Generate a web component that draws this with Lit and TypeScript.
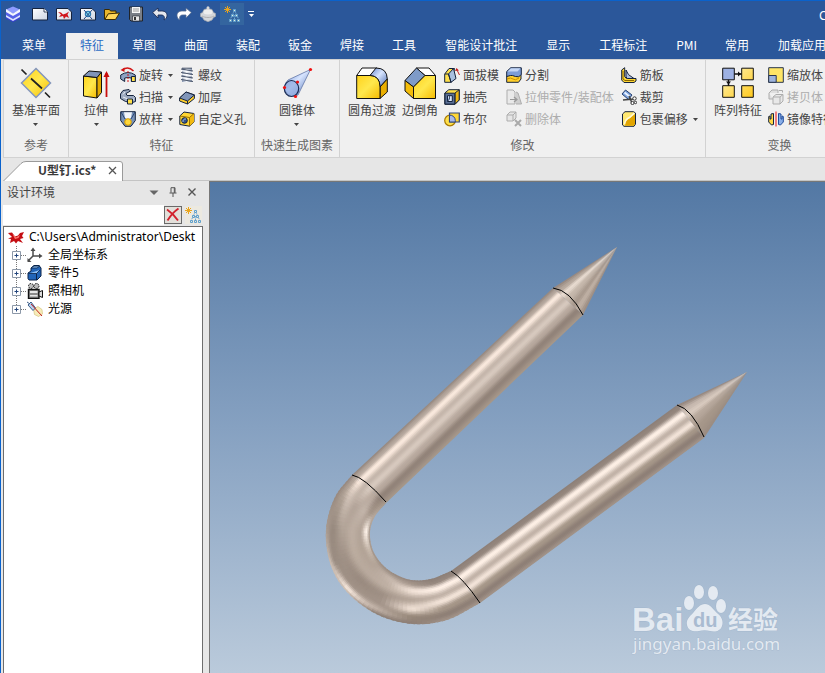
import { LitElement, html, svg, css, SVGTemplateResult } from "lit";
import { customElement, state } from "lit/decorators.js";
import { classMap } from "lit/directives/class-map.js";

/* ---------- icons, 16 unit grid ---------- */
const K = "#15233d";
const G = "#adadad";

const small: Record<string, SVGTemplateResult> = {
  logo: svg`<path d="M1 9v3.500L8 16l7-3.500V9l-7 4z" fill="#3a3fd6"/><path d="M1 5v4l7 4 7-4V5L8 9z" fill="#5560ea"/>
    <path d="M1 3.500L8 .5l7 3-7 4z" fill="#8e9bff"/><path d="M1 3l7 4.500L15 3v3l-7 4-7-4z" fill="#f4f6ff"/><path d="M1 9l7 4 7-4v2l-7 4-7-4z" fill="#dbe1ff"/>`,
  sheet: svg`<path d="M.5 2.500H12L15.500 6v8H.5z" fill="url(#paper)" stroke="${K}"/><path d="M12 2.500V6h3.500" fill="#fff" stroke="${K}" stroke-width=".8"/>`,
  sheetRed: svg`<path d="M.5 2.500H12L15.500 6v8H.5z" fill="url(#paper)" stroke="${K}"/><path d="M2 6l3 .5 2 2 3-1 3-2-1.500 3L13 12l-3-1.500L8 13l-1-3-4 1 2-2.500z" fill="#d0141b"/>`,
  sheetDraw: svg`<path d="M.5 2.500H12L15.500 6v8H.5z" fill="url(#paper)" stroke="${K}"/><circle cx="8" cy="8" r="2.800" fill="#7ed3e8" stroke="#1c6fae"/><path d="M4 4l8 9M12.500 3.500L4 13" stroke="#234a86"/>`,
  open: svg`<path d="M.5 13V3.500h5l1 1.500H12v3" fill="#e9b62b" stroke="#3b2a00"/><path d="M.8 13.500l3.500-5.700 11.200-.8-4 6.500z" fill="#ffd65a" stroke="#3b2a00"/>`,
  save: svg`<path d="M1.500 1h13v14H3l-1.500-1.500z" fill="#7a7f87" stroke="#20242b"/><path d="M4 1h8v6H4z" fill="#f7f7f7"/><path d="M5 3h6M5 5h6" stroke="#9a9a9a"/><path d="M4.500 10h7v5h-7z" fill="#e8e8e8" stroke="#20242b" stroke-width=".6"/><path d="M6 11h2v3H6z" fill="#333"/>`,
  undo: svg`<path d="M.7 6.500L6 2v3h3.500c4 0 5.500 2 5.500 4.500 0 2-1 3.500-3 4.500 1-3 0-5-3-5H6v3z" fill="#e6e8ee" stroke="#1b2d55" stroke-width=".9"/>`,
  redo: svg`<path d="M15.300 6.500L10 2v3H6.500C2.500 5 1 7 1 9.500c0 2 1 3.500 3 4.500-1-3 0-5 3-5h3v3z" fill="#fff" stroke="#53698f" stroke-width=".8"/>`,
  ball: svg`<path d="M8 2.500l4 1 1.500 3 2 1v3l-2 1L12 14l-4 1.700L4 14l-1.500-2.500-2-1v-3l2-1L4 3.500z" fill="#d4d6da" stroke="#a4a7ad" stroke-width=".7"/><ellipse cx="8" cy="6" rx="4.500" ry="2.500" fill="#ededed"/><path d="M2 10c3 2 9 2 12 0" stroke="#b0b0b0" fill="none"/><circle cx="8" cy="1.800" r="1.500" fill="#d8d8d8"/>`,
  spark: svg`<path d="M3.500 0v7M0 3.500h7M1 1l5 5M6 1L1 6" stroke="#eaa51c"/><path d="M10.500 4L6 14M10.500 4L15 14M8.500 9h4M10.500 9v5" stroke="#6fa6d2" stroke-dasharray="1.500 1"/><g fill="#e9efd9" stroke="#5f9fce"><path d="M9.500 3.500h2v2h-2zM7.500 8.500h2v2h-2zM11.500 8.500h2v2h-2zM5.500 13.500h2v2h-2zM9.500 13.500h2v2h-2zM13.500 13.500h2v2h-2z"/></g>`,
  revolve: svg`<path d="M.7 8q7.300-5 14.600 0v6.500h-4V11q-3.300-1-6.600 0v3.500L.7 12z" fill="#8da3c4" stroke="${K}"/><path d="M11.500 9.500h3.800v5h-3.800z" fill="#ffe04a" stroke="${K}"/><path d="M13.500 4Q8-1.500 2.500 3" fill="none" stroke="#d11515" stroke-width="1.500"/><path d="M.5 3L4.500.5v4.500z" fill="#d11515"/><path d="M8 4v12" stroke="#d11515" stroke-dasharray="2 1"/>`,
  sweep: svg`<path d="M3 1.500l6-1 1.500 1.500L6 4.500l1 2h6.500l2 2v4l-3 1-7-1-5-3V5z" fill="#9daac0" stroke="${K}"/><path d="M3 5.500L5 3M3 8l5 2h6" stroke="#e8edf5" fill="none"/><path d="M7.500 10h5v5h-5z" fill="#ffe04a" stroke="${K}"/>`,
  loft: svg`<path d="M.7.7h14.600v8.800L11 15.300H5L.7 9.500z" fill="#7892b8" stroke="${K}"/><path d="M4 1.200h8L11 7l-3 1.500L5 7z" fill="#f2f5fa"/><path d="M1 1l4 7M15 1l-4 7" stroke="#2b4574"/><circle cx="8" cy="11" r="3.300" fill="#ffd83b" stroke="#d49b00"/>`,
  thread: svg`<path d="M3 1h10v14H3z" fill="url(#steel)"/><path d="M2 2l12 2M2 5.500l12 2M2 9l12 2M2 12.500l12 2" stroke="#4b566a"/><path d="M2 3.500l12 2M2 7l12 2M2 10.500l12 2" stroke="#fff"/><path d="M3 1.200h10" stroke="#4b566a"/>`,
  thicken: svg`<path d="M.6 9L7 3l8.400 3v3.500L8.500 15 .6 12z" fill="#ffcf2b" stroke="${K}"/><path d="M.6 9L7 3l8.400 3-6.900 6z" fill="#8095b8" stroke="${K}"/><path d="M8.500 12v3" stroke="${K}"/>`,
  hole: svg`<path d="M.8 5L5 1l10 1.500V11l-4.500 4.200L.8 13.500z" fill="#ffd633" stroke="${K}"/><path d="M10.500 6.500L15 2.500V11l-4.500 4.200z" fill="#f2b90f"/><path d="M.8 5l9.700 1.500L15 2.500M10.500 6.500V15" fill="none" stroke="#9b7100"/><circle cx="5.500" cy="9.500" r="2.800" fill="#34568e" stroke="${K}"/><path d="M4 11a2.500 2.500 0 013-3" stroke="#a8bfe2" fill="none"/>`,
  draft: svg`<path d="M.7 7l4.300-5.500h5.500L7 15.300H.7z" fill="#ffe04a" stroke="${K}"/><path d="M4.500 7L9.500 1.500l2.500 10-5 3.800z" fill="#a9bfe0" stroke="${K}"/><path d="M1 7h3.500L7 15.300" stroke="${K}" fill="none"/><path d="M15.500 8l-2.500-5" stroke="#c42020"/><path d="M11 4L12.500 1 15 3.500z" fill="#c42020"/>`,
  shell: svg`<path d="M.8 4l4-3.300h10.400V11L11 15.300H.8z" fill="#ffe04a" stroke="${K}"/><path d="M11 4l4.200-3.300V11L11 15.200z" fill="#edb511" stroke="${K}"/><path d="M1 4.200h9.800v10.900H1z" fill="#5b7096" stroke="${K}"/><path d="M3.500 6.700h4.800v5.800H3.500z" fill="#dce7f8" stroke="${K}"/><path d="M3.500 12.500l2-2.500V6.700" fill="#6c96cf" stroke="${K}" stroke-width=".7"/>`,
  boolean: svg`<circle cx="6" cy="9.500" r="5.300" fill="#ffe04a" stroke="#a97a00" stroke-width="1.200"/><path d="M5.500 2h9.800v9H5.500z" fill="#ffd633" stroke="#31477c" stroke-width="1.200"/><path d="M5.500 4.200a5.300 5.300 0 015.800 5.300V11H5.500z" fill="#a9b9e8" stroke="#31477c"/>`,
  split: svg`<path d="M.7 9l2.500-2H15v5l-2.500 3.300H.7z" fill="#ffcf2b" stroke="${K}"/><path d="M.7 4.500l4-3.700H15.300V7.500Q13 11 9.500 9.500T4.500 8.500L.7 9.500z" fill="#7c9cd6" stroke="${K}"/><path d="M1.500 4.500L5 1.300h9.500l-3 3.200z" fill="#c4d6f5"/><path d="M1 12q4-2 6 0t6-1" stroke="#c98f00" fill="none"/>`,
  stretchPart: svg`<path d="M1 1h6l2 2v12H1z" fill="#e9e9e9" stroke="${G}"/><path d="M10 3l2 1 3.500 11H10" fill="#cfcfcf" stroke="${G}"/><path d="M4 10.500h6M8 8l3 2.500L8 13" stroke="#999" fill="none" stroke-width="1.200"/>`,
  deleteBody: svg`<path d="M1 4l3-3h6v6l-3 3H1z" fill="#e6e6e6" stroke="${G}"/><path d="M1 4h6v6M7 4l3-3" fill="none" stroke="${G}"/><path d="M9 9l6 6M15 9l-6 6" stroke="#aaa" stroke-width="2"/>`,
  rib: svg`<path d="M.7 3l3-2.300v9L5.500 11.500H15v2.500L13 15.500H3L.7 13z" fill="#ffd633" stroke="${K}"/><path d="M5 3q1 5 8 8.500H6.500L5 10z" fill="#aebddd" stroke="${K}"/><path d="M2 4v8l2 1.500h9" fill="none" stroke="#8a6800"/>`,
  trim: svg`<path d="M1 5l3.500-4L11 6l-3.500 4.500z" fill="#7da4df" stroke="#29416f"/><path d="M3.500 3.500l5 4" stroke="#eaf2ff" stroke-width="1.800"/><path d="M2 11l11-1M8 7l3 7" stroke="#444" stroke-width="1.500"/><circle cx="13.500" cy="9.500" r="1.700" fill="#fff" stroke="#333"/><circle cx="11.500" cy="14" r="1.600" fill="#fff" stroke="#333"/><circle cx="14.500" cy="13.500" r="1.200" fill="#fff" stroke="#333"/>`,
  wrap: svg`<path d="M4 .7h8.500L14.500 2v11L13 15.300H3L1.500 14V3z" fill="#ffe873" stroke="${K}"/><path d="M4 14.800q0-6 5-7.800l5-4v10l-1.300 1.800z" fill="#e2a500"/><path d="M3.500 13q1-5 5-6.500L13.500 2" fill="none" stroke="#fff9d8" stroke-width="1.500"/>`,
  scale: svg`<path d="M.7.700h14.600v14.600H.7z" fill="#ffe566" stroke="#29354d"/><path d="M.7 8.500h7.500v6.800H.7z" fill="#9eb4dd" stroke="#29354d"/>`,
  copyBody: svg`<path d="M1 4l3-3h6v3M1 4v6h4" fill="#dfdfdf" stroke="${G}"/><path d="M5 8l3-2.500h7V12l-3 3H5z" fill="#e8e8e8" stroke="${G}"/><path d="M5 8h7v7M12 8l3-2.500" fill="none" stroke="${G}"/><path d="M11 1.500h3.500v2" fill="none" stroke="#aaa"/>`,
  mirror: svg`<path d="M5.500 2.500v11L3.500 14 .7 11V5.500L2 5v3h1V3z" fill="#ffd845" stroke="${K}"/><path d="M10.500 2.500v11l2 .5 2.800-3V5.500L14 5v3h-1V3z" fill="#88aee8" stroke="#1f4b9c"/><path d="M8 .5v15" stroke="#e11"/>`,
  model: svg`<path d="M0 4l4-.5 3 4 3-1 2-2.500 4-1-2 4 1.500 2L12 10l3 4-5-2-2 2.500L6 12l-4 2 1-4-3-.5L4 8z" fill="#c40d12"/><path d="M4.500 5L8 8.500l4-2.500-1.500 3L7 10z" fill="#ff7b70"/>`,
  axes: svg`<path d="M6 9V2M6 9h8M6 9l-5 5" stroke="#4c4c4c" stroke-width="1.500"/><path d="M3.500 4L6 .5 8.500 4zM12 6.500L15.500 9 12 11.500zM.5 11v4h4z" fill="#4c4c4c"/>`,
  part: svg`<path d="M1 8l3-2V3l3-2.500h5L14 3v8l-4 4H2l-1-1.500z" fill="#2265b8" stroke="#0b2348"/><path d="M4 3h6l3-2H7zM1.500 8.500h8L13 5" fill="#8fc0f2" stroke="#0b2348" stroke-width=".8"/><path d="M9.500 8.500V15" stroke="#0b2348"/>`,
  camera: svg`<circle cx="4" cy="3" r="2.500" fill="#bbb" stroke="#111" stroke-dasharray="1.500 1"/><circle cx="9.500" cy="3" r="2.500" fill="#bbb" stroke="#111" stroke-dasharray="1.500 1"/><path d="M1.500 6.500H12v9H1.500z" fill="#8b8b8b" stroke="#111" stroke-width="1.400"/><path d="M3 8h7.500v2H3zM3 12h7.500v1.500H3z" fill="#e6e6e6"/><path d="M12 9l3.500-1.500v7L12 13z" fill="#ddd" stroke="#111"/>`,
  light: svg`<path d="M6.500 8l4.500-2.500 4 3 .5 4.500-4 2.500-4-2z" fill="#f6ecba" stroke="#d0be70" stroke-width=".6"/><path d="M1 4l3-3 4.500 6-2.500 2.500z" fill="#b8d2f0" stroke="#3c5d87"/><path d="M4 3l11 12" stroke="#c51d1d"/><path d="M0 1l3 2" stroke="#3c5d87"/>`,
};

/* ---------- icons, 32 unit grid ---------- */
const large: Record<string, SVGTemplateResult> = {
  plane: svg`<path d="M16 1.500L30.500 16 16 30.500 1.500 16z" fill="url(#gold)" stroke="#8496bd" stroke-width="1.500"/><path d="M1.500 2.500l5 5M11 11.500L22 21.500M25 25.500l5 5" stroke="#222" stroke-width="1.700"/>`,
  extrude: svg`<path d="M3.500 9L17 10.500V31L3.500 29z" fill="url(#gold)" stroke="#111"/><path d="M17 10.500L21.500 5v20.500L17 31z" fill="#e5ab00" stroke="#111"/><path d="M3.500 9L9 4l12.500 1L17 10.500z" fill="#8094b8" stroke="#111"/><path d="M26.500 30V6" stroke="#c90d0d" stroke-width="1.800"/><path d="M23.500 10l3-6 3 6z" fill="#c90d0d"/>`,
  cone: svg`<path d="M29.500 2.500L7 13Q1.500 19 5 25q5 6 12 3z" fill="url(#blue)" stroke="#6478a8" stroke-width=".8"/><ellipse cx="10.500" cy="21.500" rx="7.200" ry="8" fill="#8fa9e0" fill-opacity=".7" stroke="#1a2c55" stroke-width="1.200"/><g fill="#f01010"><circle cx="29.500" cy="2.500" r="1.600"/><circle cx="3.500" cy="20.500" r="1.600"/><circle cx="16.500" cy="15" r="1.600"/><circle cx="14.500" cy="29.500" r="1.600"/></g>`,
  fillet: svg`<path d="M.7 8.500L6 1h15l-7 7.500z" fill="#fff" stroke="#111"/><path d="M14 8.500L20 1q11 0 11.300 11L24 20q0-11-10-11.500z" fill="url(#blue)" stroke="#111"/><path d="M24 20l7.300-8v13L24 31.500z" fill="#e9ae00" stroke="#111"/><path d="M.7 8.500H14Q24 9 24 20v11.500H.7z" fill="url(#gold)" stroke="#111"/>`,
  chamfer: svg`<path d="M12.500 1H25l6.500 7.500H21z" fill="#fff" stroke="#111"/><path d="M1 13.500L12.500 1 21 8.500 9.500 20z" fill="#7e9bc8" stroke="#111"/><path d="M1 13.500L9.500 20v11.500L1 24z" fill="#f4bd0a" stroke="#111"/><path d="M9.500 20L21 8.500h10.500v23h-22z" fill="url(#gold)" stroke="#111"/>`,
  pattern: svg`<path d="M12 7h8M6.500 12v7" stroke="#111" stroke-width="1.500"/><path d="M16 4.500v5l3-2.500zM4 14.500h5l-2.500 3z" fill="#111"/><path d="M.7 1.200h11.600v11.600H.7z" fill="#9db1e3" stroke="#111"/><path d="M19.700 1.200h11.600v11.600H19.700zM.7 18.700h11.600v11.600H.7zM19.700 18.700h11.600v11.600H19.700z" fill="url(#cell)" stroke="#111"/>`,
};

const icon = (name: string) => html`<svg class="ico" viewBox="0 0 16 16" fill="none" aria-hidden="true">${small[name]}</svg>`;
const bigIcon = (name: string) => html`<svg class="big-ico" viewBox="0 0 32 32" fill="none" aria-hidden="true">${large[name]}</svg>`;
const caret = html`<svg class="caret" viewBox="0 0 5 3" aria-hidden="true"><path d="M0 0h5L2.500 3z" fill="currentColor"/></svg>`;

/* ---------- ribbon data ---------- */
interface Cmd { label: string; icon: string; menu?: boolean; off?: boolean }
interface Group { title: string; cls: string; big: Cmd[]; cols: Cmd[][] }

const GROUPS: Group[] = [
  { title: "参考", cls: "g-ref", big: [{ label: "基准平面", icon: "plane", menu: true }], cols: [] },
  {
    title: "特征", cls: "g-feat", big: [{ label: "拉伸", icon: "extrude", menu: true }],
    cols: [
      [{ label: "旋转", icon: "revolve", menu: true }, { label: "扫描", icon: "sweep", menu: true }, { label: "放样", icon: "loft", menu: true }],
      [{ label: "螺纹", icon: "thread" }, { label: "加厚", icon: "thicken" }, { label: "自定义孔", icon: "hole" }],
    ],
  },
  { title: "快速生成图素", cls: "g-quick", big: [{ label: "圆锥体", icon: "cone", menu: true }], cols: [] },
  {
    title: "修改", cls: "g-mod", big: [{ label: "圆角过渡", icon: "fillet" }, { label: "边倒角", icon: "chamfer" }],
    cols: [
      [{ label: "面拔模", icon: "draft" }, { label: "抽壳", icon: "shell" }, { label: "布尔", icon: "boolean" }],
      [{ label: "分割", icon: "split" }, { label: "拉伸零件/装配体", icon: "stretchPart", off: true }, { label: "删除体", icon: "deleteBody", off: true }],
      [{ label: "筋板", icon: "rib" }, { label: "裁剪", icon: "trim" }, { label: "包裹偏移", icon: "wrap", menu: true }],
    ],
  },
  {
    title: "变换", cls: "g-trans", big: [{ label: "阵列特征", icon: "pattern" }],
    cols: [[{ label: "缩放体", icon: "scale" }, { label: "拷贝体", icon: "copyBody", off: true }, { label: "镜像特征", icon: "mirror" }]],
  },
];

const TABS = ["菜单", "特征", "草图", "曲面", "装配", "钣金", "焊接", "工具", "智能设计批注", "显示", "工程标注", "PMI", "常用", "加载应用程序"];
const QUICK: [string, string][] = [["sheet", "新建"], ["sheetRed", "新建设计"], ["sheetDraw", "新建图纸"], ["open", "打开"], ["save", "保存"], ["undo", "撤销"], ["redo", "重做"], ["ball", "渲染"], ["spark", "设计树"]];
const NODES: [string, string][] = [["axes", "全局坐标系"], ["part", "零件5"], ["camera", "照相机"], ["light", "光源"]];

/* ---------- shaded solid ---------- */
type Pt = [number, number];
type Stop = [number, number, number, number];
type Edge = (v: number) => Pt;

const hex = (at: number, c: string): Stop => [at, parseInt(c.slice(0, 2), 16), parseInt(c.slice(2, 4), 16), parseInt(c.slice(4, 6), 16)];
const ramp = (...s: [number, string][]) => s.map(([a, c]) => hex(a, c));

const shade = (stops: Stop[], u: number): number[] => {
  let i = 0;
  while (i < stops.length - 2 && u > stops[i + 1][0]) i++;
  const a = stops[i], b = stops[i + 1];
  const t = Math.min(1, Math.max(0, (u - a[0]) / (b[0] - a[0])));
  const s = t * t * (3 - 2 * t);
  return [1, 2, 3].map((k) => a[k] + (b[k] - a[k]) * s);
};

const line = (a: Pt, b: Pt): Edge => (v) => [a[0] + (b[0] - a[0]) * v, a[1] + (b[1] - a[1]) * v];

/* smooth curve through a list of points */
const spline = (p: Pt[]): Edge => (v) => {
  const n = p.length - 1;
  const x = Math.min(n - 1e-6, v * n);
  const i = Math.floor(x), t = x - i;
  const p1 = p[i], p2 = p[i + 1];
  const p0 = p[i - 1] ?? [2 * p1[0] - p2[0], 2 * p1[1] - p2[1]];
  const p3 = p[i + 2] ?? [2 * p2[0] - p1[0], 2 * p2[1] - p1[1]];
  return [0, 1].map((k) => 0.5 * (2 * p1[k] + (p2[k] - p0[k]) * t + (2 * p0[k] - 5 * p1[k] + 4 * p2[k] - p3[k]) * t * t + (3 * p1[k] - p0[k] - 3 * p2[k] + p3[k]) * t * t * t)) as Pt;
};

const mesh = (a: Edge, b: Edge, profiles: Stop[][], nu: number, nv: number) => {
  const out: SVGTemplateResult[] = [];
  const at = (u: number, v: number) => {
    const p = a(v), q = b(v);
    return `${(p[0] + (q[0] - p[0]) * u).toFixed(2)},${(p[1] + (q[1] - p[1]) * u).toFixed(2)}`;
  };
  for (let j = 0; j < nv; j++) {
    const f = ((j + 0.5) / nv) * (profiles.length - 1);
    const k = Math.min(Math.floor(f), Math.max(0, profiles.length - 2));
    /* each cell runs a little under the next one, so that no seam shows */
    const end = Math.min(1, (j + 1.6) / nv);
    for (let i = 0; i < nu; i++) {
      const u = (i + 0.5) / nu;
      const u1 = Math.min(1, (i + 1.6) / nu);
      const c0 = shade(profiles[k], u), c1 = shade(profiles[k + 1] ?? profiles[k], u);
      const c = c0.map((x, m) => Math.round(x + (c1[m] - x) * (f - k)));
      out.push(svg`<polygon points="${at(i / nu, j / nv)} ${at(u1, j / nv)} ${at(u1, end)} ${at(i / nu, end)}" fill="rgb(${c.join(",")})"/>`);
    }
  }
  return out;
};

const upper = ramp([0, "968880"], [0.1, "b3a59b"], [0.22, "fbeade"], [0.38, "c5b6ab"], [0.5, "d8cabf"], [0.66, "b8a99e"], [0.82, "928379"], [1, "a69789"]);
const lower = ramp([0, "8e8078"], [0.1, "94867d"], [0.25, "fff1e7"], [0.42, "c1b2a7"], [0.56, "f3e4d9"], [0.72, "a69789"], [0.87, "8e7f76"], [1, "a29388"]);
const lowerBack = lower.map((s): Stop => [1 - s[0], s[1], s[2], s[3]]).reverse();
const bend = [
  upper,
  ramp([0, "9a8b80"], [0.16, "ac9e92"], [0.3, "cabcb1"], [0.5, "b3a499"], [0.72, "c3b5aa"], [0.88, "a6978b"], [1, "b5a79c"]),
  ramp([0, "a89a8f"], [0.15, "988a7f"], [0.4, "b2a498"], [0.6, "bdaea2"], [0.78, "b3a498"], [0.92, "fff4eb"], [1, "a3958a"]),
  ramp([0, "cbbdb2"], [0.12, "9b8d82"], [0.35, "a09186"], [0.6, "bbac9f"], [0.8, "b3a497"], [0.94, "c9bbae"], [1, "a09287"]),
  ramp([0, "c5b7ac"], [0.06, "f8e9de"], [0.2, "a09186"], [0.4, "9a8b80"], [0.65, "b9aa9e"], [0.9, "b3a498"], [1, "a09287"]),
  ramp([0, "8e8076"], [0.12, "bdaea3"], [0.26, "a39489"], [0.45, "9f9085"], [0.68, "bfb0a4"], [0.85, "c6b7ac"], [1, "9a8c82"]),
  ramp([0, "8e7f76"], [0.16, "968779"], [0.34, "f0e1d6"], [0.55, "b5a69a"], [0.76, "f0e1d6"], [0.92, "a5968b"], [1, "94867d"]),
  lowerBack,
  lowerBack,
];
const coneTop = ramp([0, "968880"], [0.15, "b5a79c"], [0.28, "e8dbd0"], [0.45, "c5b7ab"], [0.68, "a99a8e"], [0.8, "c0b1a5"], [1, "9c8d82"]);
const coneLow = ramp([0, "968880"], [0.2, "c8bab0"], [0.32, "d8cabf"], [0.5, "b7a89c"], [0.75, "a59689"], [1, "9c8d82"]);

const outer: Pt[] = [[352, 475], [335, 497], [326, 529], [330, 563], [346, 591], [376, 614], [412, 624], [447, 620], [480, 603]];
const inner: Pt[] = [[386, 503], [375, 516], [370, 531], [372, 548], [380, 562], [393, 573], [411, 580], [431, 579], [451, 571]];

const solid = svg`
  ${mesh(line([553, 288], [617, 247]), line([583, 315], [617, 247]), [coneTop], 20, 1)}
  ${mesh(line([677, 405], [747, 372]), line([704, 438], [747, 372]), [coneLow], 20, 1)}
  ${mesh(line([352, 475], [553, 288]), line([386, 503], [583, 315]), [upper], 36, 1)}
  ${mesh(line([451, 571], [677, 405]), line([480, 603], [704, 438]), [lower], 36, 1)}
  ${mesh(spline(outer), spline(inner), bend, 30, 56)}
  <g fill="none" stroke="#000">
    <path d="M553 288q17 2 30 27"/><path d="M677 405q15 4 27 32"/>
    <path d="M352 475q12 2 34 27"/><path d="M451 571q12 7 29 32"/>
  </g>`;

const watermark = svg`
  <g class="mark">
    <text class="mark-bai" x="632" y="631">Bai</text>
    <ellipse cx="689" cy="603" rx="5" ry="7"/><ellipse cx="699" cy="592" rx="5" ry="7"/>
    <ellipse cx="713" cy="593" rx="5" ry="7"/><ellipse cx="721" cy="606" rx="5" ry="7"/>
    <path d="M705 604c5 0 8 5 12 9 4 3 7 8 5 13-2 6-8 6-12 5-4-1-7-1-11 0-5 1-11 0-12-6-1-5 2-8 6-12 4-5 7-9 12-9z"/>
    <text class="mark-du" x="693" y="627">du</text>
    <text class="mark-cn" x="728" y="629">经验</text>
    <text class="mark-url" x="633" y="650">jingyan.baidu.com</text>
  </g>`;

@customElement("app-root")
export class AppRoot extends LitElement {
  @state() private tab = "特征";

  static styles = css`
    :host { display: flex; flex-direction: column; height: 100vh; overflow: hidden; box-sizing: border-box;
      border-left: 1px solid #0a62cc; border-top: 1px solid #0a62cc; background: #e6e6e6; color: #444;
      font: 12px/16px "Noto Sans", "Noto Sans CJK SC", sans-serif; }
    * { box-sizing: border-box; }
    button { font: inherit; color: inherit; background: none; border: 0; padding: 0; margin: 0; white-space: nowrap; }
    .ico { width: 16px; height: 16px; flex: none; display: block; }
    .big-ico { width: 32px; height: 32px; display: block; }
    .caret { width: 5px; height: 3px; flex: none; display: block; }

    .top { background: #2b579a; color: #fff; flex: none; }
    .quick { display: flex; align-items: center; height: 26px; padding-left: 4px; margin-bottom: 6px; overflow: hidden; }
    .quick .ico { margin: 0 auto; }
    .brand { width: 16px; margin-right: 7px; }
    .tool { width: 24px; height: 22px; }
    .tool.lit { background: #34659f; }
    .more { width: 14px; height: 22px; display: grid; justify-items: center; align-content: center; gap: 2px; }
    .more::before { content: ""; width: 6px; height: 1px; background: #fff; }
    .title { margin-left: auto; width: 6px; padding-top: 4px; overflow: hidden; white-space: nowrap; }
    .tabs { display: flex; height: 26px; padding-left: 7px; overflow: hidden; }
    .tab { padding: 0 14px 2px; flex: none; font-family: "Noto Sans CJK SC", sans-serif; }
    .tab.long { padding: 0 15px 2px; }
    .tab:first-child { margin-right: 6px; }
    .tab.on { background: #f0f0f0; color: #2b6cc4; }

    .ribbon { display: flex; flex: none; height: 99px; margin-left: 2px; background: #f0f0f0; border: 1px solid #d2d2d2; border-right: 0;
      overflow: hidden; font-family: "Noto Sans CJK SC", sans-serif; }
    .group { display: flex; flex-direction: column; flex: none; padding-top: 4px; border-right: 1px solid #d2d2d2; }
    .cmds { display: flex; height: 72px; align-items: flex-start; }
    .g-ref { width: 65px; } .g-ref .cmds, .g-quick .cmds { justify-content: center; }
    .g-feat { width: 186px; padding-left: 11px; }
    .g-quick { width: 85px; }
    .g-mod { width: 366px; padding-left: 8px; }
    .g-trans { width: 148px; padding-left: 8px; }
    .cap { text-align: center; color: #666; line-height: 18px; }
    .g-feat .cap { margin-left: -11px; } .g-mod .cap, .g-trans .cap { margin-left: -8px; }
    .big { display: flex; flex-direction: column; align-items: center; padding-top: 3px; min-width: 32px; }
    .big .name { line-height: 22px; }
    .big .caret { margin-top: 2px; }
    .big + .big { margin-left: 6px; }
    .col { display: flex; flex-direction: column; align-items: flex-start; margin-left: 6px; }
    .g-feat .col { margin-left: 8px; }
    .g-feat .col + .col { margin-left: 6px; }
    .col + .col { margin-left: 7px; }
    .row { display: flex; align-items: center; height: 22px; gap: 3px; }
    .row .caret { margin-left: 2px; }
    .off { color: #adadad; }

    .docs { display: flex; flex: none; height: 23px; padding: 3px 0 0 2px; }
    .doc { display: flex; align-items: center; gap: 12px; width: 120px; position: relative; padding: 0 0 2px 35px; }
    .doc-shape { position: absolute; inset: 0; width: 100%; height: 100%; }
    .doc-name { position: relative; font-weight: 700; color: #3a3a3a; font-family: "Noto Sans CJK SC", sans-serif; }
    .close { position: relative; width: 9px; height: 9px; }
    .close svg { display: block; width: 9px; height: 9px; }
    .docs-rest { flex: 1; border-bottom: 1px solid #c4c4c4; }

    .work { display: flex; flex: 1; min-height: 0; }
    .side { display: flex; flex-direction: column; width: 202px; padding-left: 2px; flex: none; }
    .side-head { display: flex; align-items: center; height: 23px; padding: 0 6px 2px 4px; gap: 9px; font-family: "Noto Sans CJK SC", sans-serif; }
    .side-head h2 { font: inherit; margin: 0 auto 0 0; }
    .side-head svg { display: block; width: 10px; height: 10px; }
    .find { display: flex; height: 21px; align-items: center; padding-right: 1px; }
    .find input { flex: 1; min-width: 0; height: 20px; border: 0; background: #fff; padding: 0 4px; outline: 0; }
    .clear { width: 18px; height: 18px; border: 1px solid #6a6a6a; background: #e3e0da; }
    .clear svg { display: block; width: 16px; height: 16px; }
    .tree-btn { width: 17px; height: 18px; margin-left: 3px; background: #ece9e0; }
    .tree { flex: 1; margin: 1px 0 0; padding: 1px 0 0 4px; list-style: none; background: #fff; border: 1px solid #6d6d6d; border-bottom: 0; color: #000; overflow: hidden; }
    .tree ul { margin: 0; padding: 0; list-style: none; }
    .node { display: flex; align-items: center; height: 18px; white-space: nowrap; gap: 5px; }
    .branch { width: 19px; height: 18px; flex: none; display: block; margin-right: -5px; }
    .split { width: 7px; flex: none; border-right: 1px solid #777; }
    .view { flex: 1; min-width: 0; border-top: 1px solid #777; background: linear-gradient(#5378a4, #86a1c1 50%, #bacadb); }
    .view svg { display: block; width: 100%; height: 100%; }
    .mark { fill: #eef2f7; fill-opacity: .85; stroke: #8ea5c0; stroke-opacity: .35; stroke-width: 1px; paint-order: stroke; }
    .mark-bai { font: 700 33px "Liberation Sans", sans-serif; }
    .mark-du { font: 700 20px "Liberation Sans", sans-serif; fill: #a9bbd1; fill-opacity: 1; stroke: none; }
    .mark-cn { font: 700 25px "Noto Sans CJK SC", sans-serif; }
    .mark-url { font: 17px "Noto Sans", sans-serif; }
    .vh { position: absolute; width: 1px; height: 1px; overflow: hidden; clip-path: inset(50%); }
  `;

  private bigCmd(c: Cmd) {
    return html`<button class="big">${bigIcon(c.icon)}<span class="name">${c.label}</span>${c.menu ? caret : ""}</button>`;
  }

  private rowCmd(c: Cmd) {
    return html`<button class=${classMap({ row: true, off: !!c.off })} ?disabled=${c.off}>${icon(c.icon)}<span>${c.label}</span>${c.menu ? caret : ""}</button>`;
  }

  render() {
    return html`
      <header class="top">
        <div class="quick">
          <span class="brand">${icon("logo")}</span>
          ${QUICK.map(([n, t]) => html`<button class=${classMap({ tool: true, lit: n === "spark" })} aria-label=${t}>${icon(n)}</button>`)}
          <button class="more" aria-label="更多">${caret}</button>
          <span class="title">C</span>
        </div>
        <nav class="tabs">
          ${TABS.map((t) => html`<button class=${classMap({ tab: true, long: t.length > 3, on: t === this.tab })} @click=${() => (this.tab = t)}>${t}</button>`)}
        </nav>
      </header>

      <section class="ribbon">
        ${GROUPS.map((g) => html`
          <div class="group ${g.cls}">
            <div class="cmds">
              ${g.big.map((c) => this.bigCmd(c))}
              ${g.cols.map((col) => html`<div class="col">${col.map((c) => this.rowCmd(c))}</div>`)}
            </div>
            <div class="cap">${g.title}</div>
          </div>`)}
      </section>

      <div class="docs">
        <div class="doc">
          <svg class="doc-shape" viewBox="0 0 120 20" preserveAspectRatio="none" aria-hidden="true"><path d="M.5 20L18 2.500Q20 .5 23 .5H117q2.500 0 2.500 2.500V20" fill="#fff" stroke="#9a9a9a"/></svg>
          <span class="doc-name">U型钉.ics*</span>
          <button class="close" aria-label="关闭"><svg viewBox="0 0 9 9"><path d="M1 1l7 7M8 1L1 8" stroke="#555" stroke-width="1.300"/></svg></button>
        </div>
        <div class="docs-rest"></div>
      </div>

      <main class="work">
        <aside class="side">
          <div class="side-head">
            <h2>设计环境</h2>
            <button aria-label="选项"><svg viewBox="0 0 10 10"><path d="M.5 3.500h9L5 8z" fill="#666"/></svg></button>
            <button aria-label="固定"><svg viewBox="0 0 10 10" fill="none"><path d="M3 .7h4v5M3 .7v5M6.300 1v5M1.500 6h7M5 6v4" stroke="#555"/></svg></button>
            <button aria-label="关闭面板"><svg viewBox="0 0 10 10"><path d="M1.500 1.500l7 7M8.500 1.500l-7 7" stroke="#555" stroke-width="1.400"/></svg></button>
          </div>
          <div class="find">
            <label class="vh" for="q">搜索</label><input id="q" type="text" />
            <button class="clear" aria-label="清除"><svg viewBox="0 0 16 16"><path d="M2 2.500q6 4 11 11M13.500 1.500Q7 6 2.500 13.500" fill="none" stroke="#d2222d" stroke-width="1.900"/></svg></button>
            <button class="tree-btn" aria-label="设计树">${icon("spark")}</button>
          </div>
          <ul class="tree">
            <li>
              <div class="node">${icon("model")}<span>C:\\Users\\Administrator\\Deskt</span></div>
              <ul>
                ${NODES.map(([n, t], i) => html`
                  <li class="node">
                    <svg class="branch" viewBox="0 0 19 18" fill="none" aria-hidden="true">
                      <path d="M8.500 0V${i < NODES.length - 1 ? 18 : 9}M9 9.500h10" stroke="#777" stroke-dasharray="1 1"/>
                      <path d="M4.500 5.500h8v8h-8z" fill="#fff" stroke="#8c98a8"/><path d="M6.500 9.500h4M8.500 7.500v4" stroke="#24467c"/>
                    </svg>
                    ${icon(n)}<span>${t}</span>
                  </li>`)}
              </ul>
            </li>
          </ul>
        </aside>
        <div class="split"></div>
        <div class="view">
          <svg viewBox="210 182 615 491" role="img" aria-label="U型钉">
            <defs>
              <linearGradient id="gold" x2="1" y2="1"><stop offset="0" stop-color="#ffd21c"/><stop offset=".5" stop-color="#ffe84d"/><stop offset="1" stop-color="#f6bb00"/></linearGradient>
              <linearGradient id="blue" x2="1" y2="1"><stop offset="0" stop-color="#5f82cc"/><stop offset=".45" stop-color="#d8e5ff"/><stop offset="1" stop-color="#496bb2"/></linearGradient>
              <linearGradient id="cell" x2="1" y2="1"><stop offset="0" stop-color="#fff7c0"/><stop offset="1" stop-color="#ffc91c"/></linearGradient>
              <linearGradient id="paper" x2="1" y2="1"><stop offset="0" stop-color="#fff"/><stop offset="1" stop-color="#cdd5e2"/></linearGradient>
              <linearGradient id="steel"><stop offset="0" stop-color="#8291ab"/><stop offset=".45" stop-color="#f3f6fb"/><stop offset="1" stop-color="#8291ab"/></linearGradient>
            </defs>
            ${solid}${watermark}
          </svg>
        </div>
      </main>`;
  }
}
